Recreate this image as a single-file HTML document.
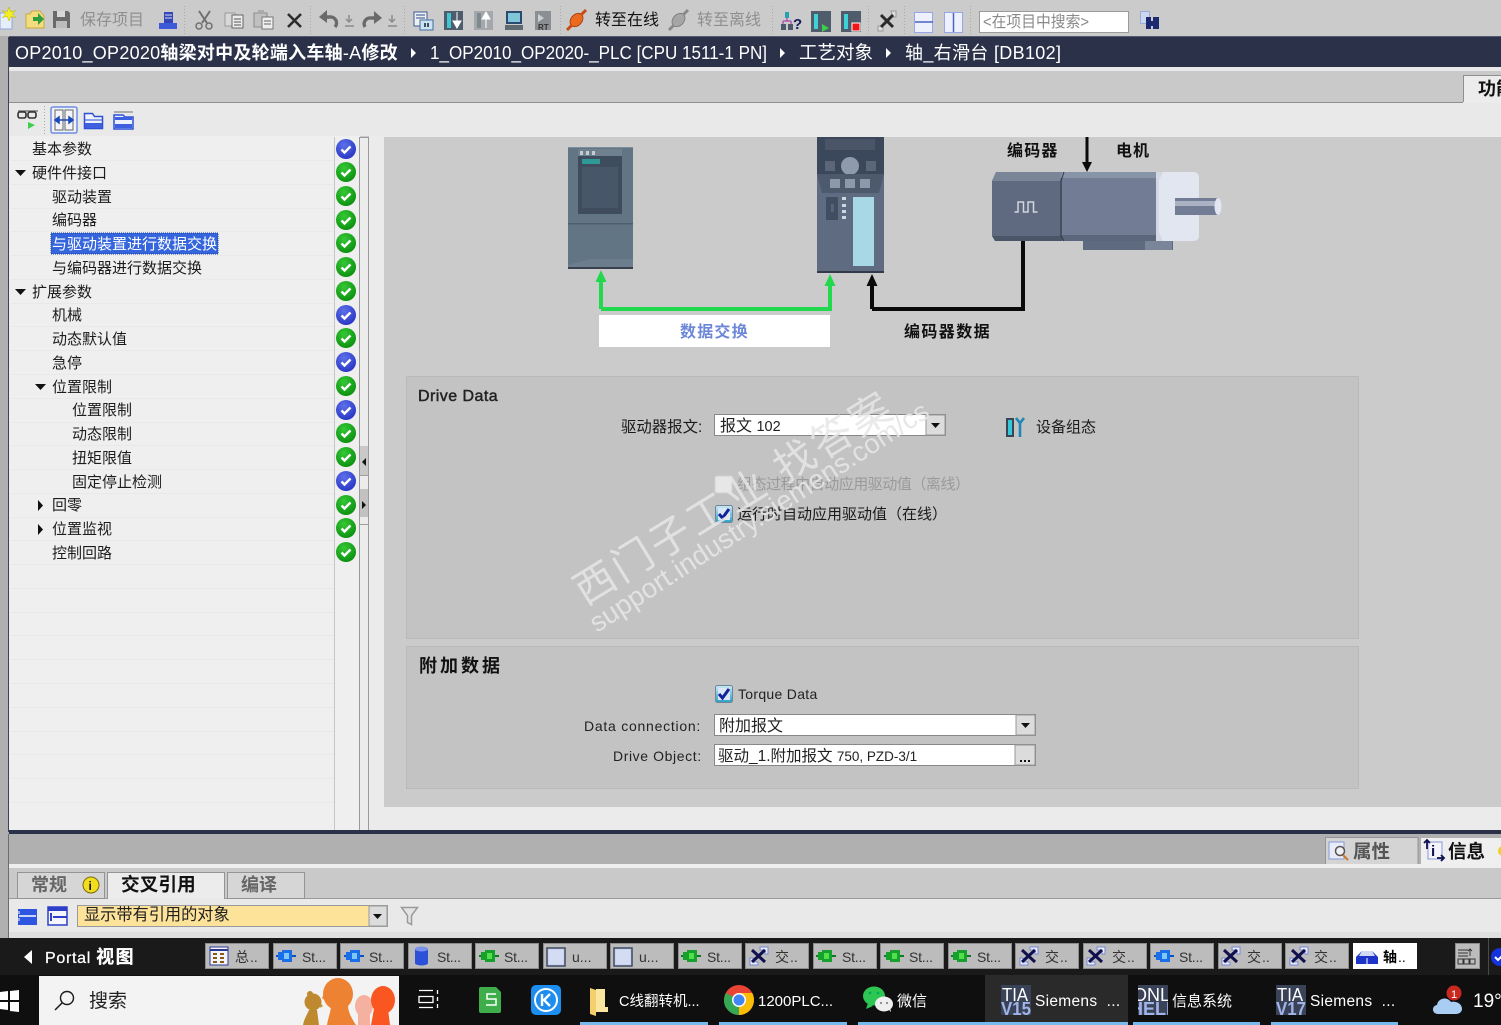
<!DOCTYPE html>
<html lang="zh"><head><meta charset="utf-8"><title>TIA Portal</title>
<style>
html,body{margin:0;padding:0;width:1501px;height:1025px;overflow:hidden;background:#c9c9c9}
svg{display:block;position:absolute;left:0;top:0;filter:blur(.3px)}
text{font-family:"Liberation Sans","Noto Sans CJK SC",sans-serif;font-size:15px;fill:#1c1c1c}
.t{font-size:15px;fill:#1a1a1a}
.g{fill:#8f8f8f;font-size:16px}
.w{fill:#fff}
.b{font-weight:700}
.k{font-size:14px;fill:#333}
.tb{font-size:14.500px;fill:#fff}
.sep{stroke:#a9a9a9;stroke-width:1;stroke-dasharray:1 2}
.row{stroke:#e9e9e9;stroke-width:1}
</style></head><body>
<svg width="1501" height="1025" viewBox="0 0 1501 1025" xmlns="http://www.w3.org/2000/svg">
<defs>
<clipPath id="hc"><rect x="1138" y="985" width="30" height="30"/></clipPath>
<radialGradient id="gc" cx=".4" cy=".3" r=".8"><stop offset="0" stop-color="#35c835"/><stop offset="1" stop-color="#078a0b"/></radialGradient>
<radialGradient id="bc" cx=".4" cy=".3" r=".8"><stop offset="0" stop-color="#5d70ea"/><stop offset="1" stop-color="#2330c0"/></radialGradient>
<linearGradient id="cb" x1="0" y1="0" x2="0" y2="1"><stop offset="0" stop-color="#cfe8f5"/><stop offset="1" stop-color="#27a0c8"/></linearGradient>
<symbol id="ok" viewBox="0 0 20 20" overflow="visible"><circle cx="10" cy="10" r="10" fill="url(#gc)"/><path d="M5.500 10.500l3 3 6-6" fill="none" stroke="#fff" stroke-width="2.400"/></symbol>
<symbol id="bl" viewBox="0 0 20 20" overflow="visible"><circle cx="10" cy="10" r="10" fill="url(#bc)"/><path d="M5.500 10.500l3 3 6-6" fill="none" stroke="#fff" stroke-width="2.400"/></symbol>
<symbol id="chk" viewBox="0 0 18 18"><rect x=".5" y=".5" width="17" height="17" rx="2" fill="url(#cb)" stroke="#6f8796"/><rect x="3" y="3" width="12" height="12" fill="#dbe7f5"/><path d="M4 9l3.500 4 6.500-9" fill="none" stroke="#10229a" stroke-width="3"/></symbol>
<symbol id="sb" viewBox="0 0 20 14"><path d="M0 7h20" stroke="#0a52c8" stroke-width="2"/><path d="M2 3h4v-2h10v12h-10v-2h-4z" fill="#1c6ee8"/><rect x="8" y="4" width="5" height="6" fill="#7ec8f8"/></symbol>
<symbol id="sg" viewBox="0 0 20 14"><path d="M0 7h20" stroke="#0d7c1d" stroke-width="2"/><path d="M2 3h4v-2h10v12h-10v-2h-4z" fill="#16a02c"/><rect x="8" y="4" width="5" height="6" fill="#52e04a"/></symbol>
<symbol id="xr" viewBox="0 0 20 20"><path d="M11 1h8v7h-3v-4h-5zM1 12h3v4h5v3h-8z" fill="#e8ecf8" stroke="#7888d8"/><path d="M3 4l13 12M16 4l-13 12" stroke="#10104e" stroke-width="3"/></symbol>
<symbol id="ub" viewBox="0 0 20 20"><rect x="1" y="1" width="18" height="18" fill="#c9d4f0" stroke="#3e4a60" stroke-width="1.500"/><rect x="3" y="3" width="14" height="14" fill="#d3dcf2"/></symbol>
</defs>

<!-- window bg -->
<rect width="1501" height="1025" fill="#c9c9c9"/>
<rect x="0" y="0" width="1501" height="36" fill="#cbcbcb"/>

<!-- toolbar icons -->
<rect x="0" y="13" width="12" height="16" fill="#e6eefa" stroke="#8fa4d8"/><path d="M9 7l1.800 5 5-1.500-3.500 3.500 3.500 3.500-5-1-1.800 4.500-1.800-4.500-5 1 3.500-3.500-3.500-3.500 5 1.500z" fill="#f4f020" stroke="#b6b400" stroke-width=".5"/>
<path d="M26 14h4l2-3h8l4 5v12h-18z" fill="#f3dc7e" stroke="#c9a93b"/><path d="M33 17h5v-4l6 6-6 6v-4h-5z" fill="#2d9d3d"/>
<path d="M53 11h15l2 2v15h-17z" fill="#6a6a6a"/><rect x="57" y="11" width="8" height="6" fill="#d8d8d8"/><rect x="56" y="21" width="11" height="7" fill="#bcbcbc"/>
<text x="80" y="25" class="g">保存项目</text>
<rect x="164" y="12" width="9" height="11" fill="#3346b8"/><path d="M165 15h7M165 18h7" stroke="#dde" stroke-width="1"/><path d="M159 23h18v6h-18z" fill="#3d5ad8"/>
<line x1="184.500" y1="6" x2="184.500" y2="34" class="sep"/>
<path d="M199 11l8 12M210 11l-8 12" stroke="#707070" stroke-width="2"/><circle cx="199" cy="26" r="3" fill="none" stroke="#707070" stroke-width="1.500"/><circle cx="209" cy="26" r="3" fill="none" stroke="#707070" stroke-width="1.500"/>
<rect x="225" y="13" width="10" height="13" fill="#d8d8d8" stroke="#9a9a9a"/><rect x="232" y="15" width="11" height="13" fill="#ececec" stroke="#666"/><path d="M234 19h7M234 22h7M234 25h7" stroke="#555"/>
<rect x="254" y="13" width="13" height="14" fill="#c0c0c0" stroke="#8c8c8c"/><rect x="258" y="10" width="6" height="4" fill="#aaa"/><rect x="262" y="17" width="11" height="12" fill="#efefef" stroke="#777"/><path d="M264 21h7M264 24h7" stroke="#666"/>
<path d="M288 14l13 13M301 14l-13 13" stroke="#2d2d2d" stroke-width="2.600"/>
<line x1="310.500" y1="6" x2="310.500" y2="34" class="sep"/>
<path d="M323 17h7a6 6 0 0 1 5 10" fill="none" stroke="#6a6a6a" stroke-width="3.400"/><path d="M319 17l8-7v13z" fill="#6a6a6a"/>
<path d="M349 15v7m-3-3l3 3 3-3M345 26h9" stroke="#8b8b8b" stroke-width="1.500" fill="none"/>
<path d="M378 18h-7a6 6 0 0 0-6 9" fill="none" stroke="#6a6a6a" stroke-width="3.400"/><path d="M382 18l-8-7v13z" fill="#6a6a6a"/>
<path d="M392 15v7m-3-3l3 3 3-3M388 26h9" stroke="#8b8b8b" stroke-width="1.500" fill="none"/>
<line x1="404.500" y1="6" x2="404.500" y2="34" class="sep"/>
<rect x="414" y="12" width="13" height="14" fill="#f0f0f0" stroke="#3c5a92"/><path d="M416 15h9M416 18h9" stroke="#2a4a90"/><rect x="420" y="20" width="13" height="10" fill="#cbe4f4" stroke="#406ea0"/><path d="M425 23v4M428 23v4" stroke="#123" stroke-width="1.500"/>
<rect x="444" y="11" width="19" height="19" fill="#4f5c6c"/><rect x="447" y="13" width="4" height="15" fill="#3fc6d0"/><path d="M457 12v9m-4 0h8l-4 7z" fill="#fff" stroke="#fff"/>
<rect x="474" y="11" width="19" height="19" fill="#a4a8ac"/><rect x="477" y="13" width="4" height="15" fill="#7f8a8e"/><path d="M486 28v-9m-4 0h8l-4-7z" fill="#fff" stroke="#fff"/>
<rect x="506" y="11" width="16" height="13" fill="#2b4a72"/><rect x="508" y="13" width="12" height="9" fill="#7fc7d8"/><rect x="505" y="25" width="18" height="5" fill="#5f6a70"/>
<rect x="535" y="11" width="16" height="19" fill="#8b8f93"/><path d="M538 14l6 4-6 4z" fill="#c7d3d0"/><text x="538" y="30" style="font-size:8px;font-weight:700;fill:#333">RT</text>
<line x1="560.500" y1="6" x2="560.500" y2="34" class="sep"/>
<ellipse cx="576.500" cy="20" rx="5.500" ry="7.500" transform="rotate(42 576.500 20)" fill="#ea6a1e" stroke="#a5340b" stroke-width=".8"/><path d="M572 25l-5 5M581 15l5-5" stroke="#c94a12" stroke-width="3"/>
<text x="595" y="25" class="t" style="font-size:16px;fill:#111">转至在线</text>
<ellipse cx="678.500" cy="20" rx="5.500" ry="7.500" transform="rotate(42 678.500 20)" fill="#a6a6a6" stroke="#777" stroke-width=".8"/><path d="M674 25l-5 5M683 15l5-5" stroke="#8a8a8a" stroke-width="3"/>
<text x="697" y="25" class="g">转至离线</text>
<line x1="772.500" y1="6" x2="772.500" y2="34" class="sep"/>
<rect x="785" y="12" width="4" height="6" fill="#27a0b0"/><path d="M787 18v3M783 21h8M783 21v3M791 21v3" stroke="#a02aa0" fill="none"/><rect x="781" y="24" width="5" height="6" fill="#4a5a6a"/><rect x="788" y="24" width="5" height="6" fill="#4a5a6a"/><text x="793" y="29" class="b" style="font-size:15px;fill:#111a5a">?</text>
<rect x="811" y="11" width="20" height="21" fill="#4f5c6c"/><rect x="814" y="14" width="4" height="15" fill="#3fd0d8"/><path d="M822 24l7 4-7 4z" fill="#3bd04a"/>
<rect x="841" y="11" width="20" height="21" fill="#4f5c6c"/><rect x="844" y="14" width="4" height="15" fill="#3fd0d8"/><rect x="852" y="23" width="8" height="8" fill="#f01414" stroke="#fff"/>
<line x1="868.500" y1="6" x2="868.500" y2="34" class="sep"/>
<path d="M891 11h5v6h-3zM878 26h5v5h-5z" fill="#ddd" stroke="#999"/><path d="M881 15l12 12M893 15l-12 12" stroke="#2a2a2a" stroke-width="3"/>
<line x1="904.500" y1="6" x2="904.500" y2="34" class="sep"/>
<rect x="914.500" y="12.500" width="18" height="20" fill="#eef1fb" stroke="#97a6e8"/><path d="M915 22h18" stroke="#4a62c8" stroke-width="1.500"/>
<rect x="944.500" y="12.500" width="18" height="20" fill="#eef1fb" stroke="#97a6e8"/><path d="M953.500 13v19" stroke="#4a62c8" stroke-width="1.500"/>
<line x1="970.500" y1="6" x2="970.500" y2="34" class="sep"/>
<rect x="979.500" y="11.500" width="149" height="21" fill="#fff" stroke="#9a9a9a"/>
<text x="983" y="27" style="font-size:16px;fill:#8a8a8a" textLength="106" lengthAdjust="spacingAndGlyphs">&lt;在项目中搜索&gt;</text>
<rect x="1140.500" y="11.500" width="9" height="12" fill="#ccd8f2" stroke="#9cacd8"/><path d="M1146 17h5v12h-5zM1153 17h6v12h-6z" fill="#1c2b70"/><path d="M1150 21h4v5h-4z" fill="#1c2b70"/>

<!-- title bar -->
<rect x="0" y="36" width="1501" height="1" fill="#525a70"/>
<rect x="9" y="37" width="1492" height="30" fill="#2a3149"/>
<rect x="0" y="36" width="9" height="800" fill="#b0b0b0"/>
<rect x="8" y="37" width="1" height="795" fill="#3c4258"/>
<text x="15" y="59" class="w" style="font-size:18px;letter-spacing:.25px">OP2010_OP2020<tspan class="b">轴梁对中及轮端入车轴</tspan>-A<tspan class="b">修改</tspan></text>
<path d="M411 48l5 5-5 5z" fill="#fff"/>
<text x="430" y="59" class="w" style="font-size:18px" textLength="337" lengthAdjust="spacingAndGlyphs">1_OP2010_OP2020-_PLC [CPU 1511-1 PN]</text>
<path d="M780 48l5 5-5 5z" fill="#fff"/>
<text x="799" y="59" class="w" style="font-size:18.500px">工艺对象</text>
<path d="M886 48l5 5-5 5z" fill="#fff"/>
<text x="905" y="59" class="w" style="font-size:18px" textLength="156">轴_右滑台 [DB102]</text>

<rect x="9" y="67" width="1492" height="4" fill="#e9e9e9"/>
<rect x="9" y="71" width="1492" height="31" fill="#c9c9c9"/>
<rect x="9" y="102" width="1454" height="1" fill="#8f8f8f"/>
<rect x="9" y="103" width="1492" height="33" fill="#e9e9e9"/>
<rect x="1463" y="75" width="38" height="28" fill="#ececec"/>
<path d="M1463.500 102V75.500H1501" fill="none" stroke="#8f8f8f"/>
<text x="1478" y="95" class="b" style="font-size:18px;fill:#111">功能</text>

<!-- tree toolbar -->
<rect x="18" y="112" width="8" height="6" rx="2" fill="none" stroke="#333" stroke-width="1.600"/><rect x="28" y="112" width="8" height="6" rx="2" fill="none" stroke="#333" stroke-width="1.600"/><path d="M18 111h20" stroke="#444"/><path d="M28 122l7 3-7 4z" fill="#3ecf4e"/>
<line x1="44.500" y1="106" x2="44.500" y2="134" class="sep"/>
<rect x="51" y="107" width="26" height="26" rx="2" fill="#eef3fb" stroke="#6d8ee2" stroke-width="1.500"/>
<rect x="55" y="110" width="8" height="20" fill="#f4f5f8" stroke="#666"/><rect x="65" y="110" width="8" height="20" fill="#f4f5f8" stroke="#666"/>
<path d="M56 120h16M59 117l-4 3 4 3zM69 117l4 3-4 3z" stroke="#1b47c0" stroke-width="1.500" fill="#1b47c0"/>
<path d="M84.500 113.500h8l2 3h8v12h-18z" fill="#eef2fd" stroke="#2c50d8" stroke-width="1.500"/><rect x="85" y="123" width="17" height="5" fill="#3e5fe0"/><path d="M85 120h17" stroke="#2c50d8"/>
<path d="M114 112h19" stroke="#999" stroke-width="1.500"/><path d="M114 115h9l2 2h8v12h-19z" fill="#eef2fd" stroke="#2c50d8" stroke-width="1.500"/><rect x="115" y="117" width="17" height="3" fill="#3e5fe0"/><rect x="115" y="124" width="17" height="4" fill="#3e5fe0"/>

<!-- tree -->
<rect x="9" y="136" width="351" height="694" fill="#efefef"/>
<g class="row">
<path d="M10 160.500h324M10 184.500h324M10 208.500h324M10 231.500h324M10 255.500h324M10 279.500h324M10 303.500h324M10 326.500h324M10 350.500h324M10 374.500h324M10 398.500h324M10 422.500h324M10 445.500h324M10 469.500h324M10 493.500h324M10 517.500h324M10 540.500h324M10 564.500h324M10 588.500h324M10 612.500h324M10 635.500h324M10 659.500h324M10 683.500h324M10 707.500h324M10 731.500h324M10 754.500h324M10 778.500h324M10 802.500h324"/>
</g>
<rect x="334" y="137" width="1" height="693" fill="#c6c6c6"/>
<rect x="359" y="137" width="1" height="693" fill="#9a9a9a"/>
<rect x="360" y="137" width="8" height="693" fill="#ececec"/>
<rect x="368" y="137" width="1" height="693" fill="#9a9a9a"/>
<path d="M360 137.500h8" stroke="#9a9a9a"/>
<rect x="360" y="446" width="8" height="29" fill="#c9c9c9"/><path d="M360 475.500h8M360 498.500h8M360 524.500h8" stroke="#9f9f9f"/>
<rect x="360" y="489" width="8" height="28" fill="#c2c2c2"/>
<path d="M366 458v8l-4-4zM362 501v8l4-4z" fill="#111"/>

<rect x="51" y="233" width="167" height="21" fill="#3465dc" stroke="#1c3d99" stroke-dasharray="1 1"/>
<g class="t">
<text x="32" y="154">基本参数</text>
<text x="32" y="178">硬件件接口</text>
<text x="52" y="202">驱动装置</text>
<text x="52" y="225">编码器</text>
<text x="52" y="249" style="fill:#fff">与驱动装置进行数据交换</text>
<text x="52" y="273">与编码器进行数据交换</text>
<text x="32" y="297">扩展参数</text>
<text x="52" y="320">机械</text>
<text x="52" y="344">动态默认值</text>
<text x="52" y="368">急停</text>
<text x="52" y="392">位置限制</text>
<text x="72" y="415">位置限制</text>
<text x="72" y="439">动态限制</text>
<text x="72" y="463">扭矩限值</text>
<text x="72" y="487">固定停止检测</text>
<text x="52" y="510">回零</text>
<text x="52" y="534">位置监视</text>
<text x="52" y="558">控制回路</text>
</g>
<path d="M15 170h11l-5.500 6zM15 289h11l-5.500 6zM35 384h11l-5.500 6z" fill="#111"/>
<path d="M38 500v11l5-5.500zM38 524v11l5-5.500z" fill="#111"/>
<use href="#bl" x="336" y="139" width="20" height="20"/>
<use href="#ok" x="336" y="162" width="20" height="20"/>
<use href="#ok" x="336" y="186" width="20" height="20"/>
<use href="#ok" x="336" y="210" width="20" height="20"/>
<use href="#ok" x="336" y="233" width="20" height="20"/>
<use href="#ok" x="336" y="257" width="20" height="20"/>
<use href="#ok" x="336" y="281" width="20" height="20"/>
<use href="#bl" x="336" y="305" width="20" height="20"/>
<use href="#ok" x="336" y="328" width="20" height="20"/>
<use href="#bl" x="336" y="352" width="20" height="20"/>
<use href="#ok" x="336" y="376" width="20" height="20"/>
<use href="#bl" x="336" y="400" width="20" height="20"/>
<use href="#ok" x="336" y="423" width="20" height="20"/>
<use href="#ok" x="336" y="447" width="20" height="20"/>
<use href="#bl" x="336" y="471" width="20" height="20"/>
<use href="#ok" x="336" y="495" width="20" height="20"/>
<use href="#ok" x="336" y="518" width="20" height="20"/>
<use href="#ok" x="336" y="542" width="20" height="20"/>

<!-- right panel -->
<rect x="369" y="136" width="1132" height="694" fill="#ebebeb"/>
<rect x="384" y="137" width="1117" height="670" fill="#cbcbcb"/>

<!-- PLC -->
<rect x="568" y="147" width="65" height="121" fill="#627585"/>
<rect x="568" y="147" width="65" height="1" fill="#7c8d9b"/>
<rect x="578" y="149" width="44" height="12" fill="#6f808f"/>
<rect x="580" y="151" width="3" height="4" fill="#c4ccd2"/><rect x="586" y="151" width="3" height="4" fill="#c4ccd2"/><rect x="592" y="151" width="3" height="4" fill="#c4ccd2"/>
<rect x="578" y="156" width="44" height="58" fill="#3e4c5e"/>
<rect x="582" y="159" width="18" height="5" fill="#2d9a98"/>
<rect x="582" y="167" width="36" height="41" fill="#48566a"/>
<rect x="568" y="223" width="65" height="1.500" fill="#4d5f6e"/>
<path d="M568 268v-3l22-6h43v9z" fill="#6c7e8d"/>
<rect x="568" y="267" width="65" height="2" fill="#39414f"/>

<!-- Drive -->
<rect x="817" y="137" width="67" height="135" fill="#5e6b80"/>
<rect x="817" y="137" width="67" height="38" fill="#3b475a"/>
<rect x="825" y="139" width="50" height="11" fill="#4a5568"/>
<ellipse cx="850" cy="166" rx="9" ry="9" fill="#8f9aad"/>
<rect x="825" y="161" width="10" height="10" fill="#5b6678"/><rect x="866" y="161" width="10" height="10" fill="#5b6678"/>
<path d="M817 174h67l-5 19h-57z" fill="#4d596c"/>
<rect x="830" y="179" width="10" height="9" fill="#8d98aa"/><rect x="845" y="179" width="10" height="9" fill="#8d98aa"/><rect x="860" y="179" width="10" height="9" fill="#8d98aa"/>
<rect x="826" y="197" width="12" height="23" fill="#414d60"/><rect x="831" y="204" width="3" height="8" fill="#58647a"/>
<rect x="842" y="197" width="4" height="3" fill="#cfd6df"/><rect x="842" y="204" width="4" height="3" fill="#cfd6df"/><rect x="842" y="210" width="4" height="3" fill="#cfd6df"/><rect x="842" y="216" width="4" height="3" fill="#cfd6df"/>
<rect x="853" y="197" width="21" height="69" fill="#a8d8e6"/>
<rect x="817" y="271" width="67" height="2" fill="#323a4a"/>

<!-- Motor -->
<path d="M992 181l4-9h66v69h-66l-4-5z" fill="#5f6a80"/>
<path d="M992 181l4-9h66l-2 9z" fill="#7b8598"/><path d="M995 241l-3-5h70v5z" fill="#4b5568"/>
<rect x="1062" y="172" width="95" height="69" fill="#727c94"/>
<path d="M1062 172h95v6h-97z" fill="#8894a8"/><path d="M1060 235h100v6h-97z" fill="#5b657b"/>
<path d="M1064 172l-3 9 0 55 3 5" fill="none" stroke="#2f3646" stroke-width="1"/>
<rect x="1083" y="241" width="90" height="9" fill="#5d6a80"/><rect x="1145" y="241" width="27" height="9" fill="#7a859a"/>
<rect x="1156" y="172" width="43" height="69" rx="5" fill="#e2e6f0"/>
<path d="M1156 172h7l-4 8v52l4 9h-7z" fill="#d4d8e2"/>
<rect x="1175" y="198" width="44" height="17" fill="#727c94"/><rect x="1175" y="201" width="44" height="5" fill="#aab2c4"/>
<ellipse cx="1218" cy="206.500" rx="3.500" ry="8.500" fill="#e2e6f0"/>
<path d="M1014.500 212h3.500v-10h5.500v10h4.500v-10h5.500v10h4" fill="none" stroke="#d2d6dd" stroke-width="1.500"/>

<!-- arrows -->
<path d="M601 309v-30M601 309h229v-28" fill="none" stroke="#22d84c" stroke-width="4"/>
<path d="M601 270l-5.500 12h11zM830 274l-5.500 12h11z" fill="#22d84c"/>
<path d="M872 309v-28M872 309h151v-68" fill="none" stroke="#0a0a0a" stroke-width="4"/>
<path d="M872 274l-5.500 12h11z" fill="#0a0a0a"/>
<path d="M1087 137v27" stroke="#0a0a0a" stroke-width="3"/><path d="M1087 172l-5-10h10z" fill="#0a0a0a"/>
<rect x="599" y="315" width="231" height="32" fill="#fff"/>
<text x="680" y="337" class="b" style="font-size:16px;fill:#6d88d8;letter-spacing:1.200px">数据交换</text>
<text x="904" y="337" class="b" style="font-size:16px;fill:#111;letter-spacing:1.400px">编码器数据</text>
<text x="1007" y="156" class="b" style="font-size:16px;fill:#111;letter-spacing:1.200px">编码器</text>
<text x="1116" y="156" class="b" style="font-size:16px;fill:#111;letter-spacing:1px">电机</text>

<!-- Drive Data -->
<rect x="406.500" y="376.500" width="952" height="262" fill="#c3c3c3" stroke="#b9b9b9"/>
<text x="418" y="401" style="font-size:16px;letter-spacing:.45px;fill:#222;stroke:#222;stroke-width:.45">Drive Data</text>
<text x="621" y="432" class="t" style="font-size:15.400px">驱动器报文:</text>
<rect x="714.500" y="414.500" width="231" height="21" fill="#fff" stroke="#888"/>
<text x="720" y="431" style="font-size:16px;fill:#222">报文 <tspan style="font-size:14.500px">102</tspan></text>
<rect x="926" y="415" width="19" height="20" fill="#dcdcdc" stroke="#999"/><path d="M931 423h9l-4.500 5z" fill="#111"/>
<rect x="1006" y="418" width="8" height="19" fill="#3a4656"/><rect x="1008" y="420" width="4" height="15" fill="#35c8d8"/>
<path d="M1016 418l4 5 4-5M1020 423v14" fill="none" stroke="#1f86b8" stroke-width="2.600"/>
<text x="1036" y="432" class="t">设备组态</text>

<rect x="715" y="476" width="17" height="17" rx="2" fill="#e7e7e7" stroke="#d2d2d2"/>
<text x="737" y="489" style="font-size:15px;fill:#9a9a9a" textLength="233">组态过程中自动应用驱动值（离线）</text>
<use href="#chk" x="715" y="505" width="18" height="18"/>
<text x="737" y="519" style="font-size:15px;fill:#1a1a1a">运行时自动应用驱动值（在线）</text>

<!-- watermark -->
<text transform="translate(585,606) rotate(-31.500)" style="font-size:41px;fill:#e6e6e6;fill-opacity:.85;letter-spacing:3px">西门子工业 找答案</text>
<text transform="translate(597,633) rotate(-33)" style="font-size:27.500px;fill:#e6e6e6;fill-opacity:.9">support.industry.siemens.com/cs</text>

<!-- 附加数据 -->
<rect x="406.500" y="646.500" width="952" height="142" fill="#c3c3c3" stroke="#b9b9b9"/>
<text x="419" y="672" class="b" style="font-size:18px;fill:#111;letter-spacing:3px">附加数据</text>
<use href="#chk" x="715" y="685" width="18" height="18"/>
<text x="738" y="699" style="font-size:14px;letter-spacing:.3px;fill:#222">Torque Data</text>
<text x="584" y="731" style="font-size:14px;letter-spacing:.75px;fill:#222">Data connection:</text>
<rect x="714.500" y="714.500" width="321" height="21" fill="#fff" stroke="#888"/>
<text x="719" y="731" style="font-size:16px;fill:#222">附加报文</text>
<rect x="1016" y="715" width="19" height="20" fill="#dcdcdc" stroke="#999"/><path d="M1021 723h9l-4.500 5z" fill="#111"/>
<text x="613" y="761" style="font-size:14px;letter-spacing:.6px;fill:#222">Drive Object:</text>
<rect x="714.500" y="744.500" width="321" height="21" fill="#fff" stroke="#888"/>
<text x="718" y="761" style="font-size:15.500px;fill:#222">驱动_1.附加报文 <tspan style="font-size:13.500px">750, PZD-3/1</tspan></text>
<rect x="1015" y="745" width="20" height="20" fill="#dcdcdc" stroke="#999"/>
<path d="M1020 761h2M1024 761h2M1028 761h2" stroke="#111" stroke-width="2"/>

<!-- bottom panel -->
<rect x="9" y="830" width="1492" height="4" fill="#2a3149"/>
<rect x="0" y="834" width="1501" height="30" fill="#b0b0b0"/>
<rect x="8" y="834" width="1" height="104" fill="#6c6c6c"/>
<rect x="9" y="864" width="1492" height="4" fill="#eeeeee"/>
<rect x="9" y="868" width="1492" height="30" fill="#c9c9c9"/>
<rect x="9" y="898" width="1492" height="1" fill="#9a9a9a"/>
<rect x="9" y="899" width="1492" height="39" fill="#e9e9e9"/>
<rect x="9" y="932" width="1492" height="6" fill="#e0e0e0"/>
<rect x="0" y="864" width="8" height="74" fill="#b0b0b0"/>

<rect x="17.500" y="872.500" width="87" height="26" fill="#d6d6d6" stroke="#949494"/>
<text x="31" y="891" class="b" style="font-size:18px;fill:#666">常规</text>
<circle cx="91" cy="885" r="8" fill="#f2dc1c" stroke="#7a6a10"/><text x="88.500" y="890" class="b" style="font-size:12px;fill:#111">i</text>
<path d="M107.500 899v-26.500h117V899" fill="#ececec" stroke="#949494"/>
<text x="121" y="891" class="b" style="font-size:18.700px;fill:#111">交叉引用</text>
<rect x="227.500" y="872.500" width="77" height="26" fill="#d6d6d6" stroke="#949494"/>
<text x="241" y="891" class="b" style="font-size:18px;fill:#666">编译</text>

<rect x="18" y="909" width="19" height="16" fill="#2d55e0"/><path d="M19 916h17" stroke="#fff" stroke-width="1.500"/><path d="M19 911v3M19 918v3" stroke="#fff"/>
<rect x="48" y="907" width="19" height="18" fill="#f4f6fc" stroke="#2d3fc8" stroke-width="1.500"/><rect x="48" y="907" width="19" height="4" fill="#2d3fc8"/><rect x="53" y="916" width="14" height="2" fill="#2d3fc8"/><rect x="50" y="913" width="2" height="8" fill="#2d3fc8"/>
<rect x="77.500" y="905.500" width="310" height="21" fill="#fde29a" stroke="#9a9a9a"/>
<text x="84" y="920" style="font-size:16.200px;fill:#1f1f1f">显示带有引用的对象</text>
<rect x="369" y="906" width="18" height="20" fill="#dcdcdc" stroke="#999"/><path d="M373 914h9l-4.500 5z" fill="#111"/>
<path d="M401.500 907.500h16l-6 8v9l-4-2v-7z" fill="#e4e4e4" stroke="#9a9a9a" stroke-width="1.500"/>

<!-- right bottom tabs -->
<path d="M1325.500 864v-26.500h92.500V864" fill="#d4d4d4" stroke="#949494"/>
<rect x="1329" y="842" width="15" height="17" fill="#e8ecf8" stroke="#8898d8"/><circle cx="1340" cy="851" r="4.500" fill="#f0f0f0" stroke="#555" stroke-width="1.500"/><path d="M1343 855l5 5" stroke="#d07820" stroke-width="2"/>
<text x="1353" y="858" class="b" style="font-size:18.500px;fill:#555">属性</text>
<rect x="1421" y="838" width="80" height="27" fill="#efefef"/>
<rect x="1428" y="842" width="14" height="17" fill="#f3f5fb" stroke="#8898d8"/>
<path d="M1424 843l3-3 3 3M1427 841v8" fill="none" stroke="#10104e" stroke-width="1.800"/>
<text x="1431" y="856" class="b" style="font-size:15px;fill:#10104e">i</text>
<path d="M1437 858h6m-2-3l3 3-3 3" fill="none" stroke="#10104e" stroke-width="1.800"/>
<text x="1448" y="858" class="b" style="font-size:18.500px;fill:#111">信息</text>
<circle cx="1503" cy="851" r="5" fill="#f0d020"/>

<!-- portal strip -->
<rect x="0" y="938" width="1501" height="37" fill="#1a1a1a"/>
<path d="M32 950v14l-8-7z" fill="#fff"/>
<text x="45" y="963" class="w" style="font-size:16px;letter-spacing:.7px;stroke:#fff;stroke-width:.25">Portal <tspan class="b" style="font-size:18px;letter-spacing:1.500px">视图</tspan></text>

<g fill="#bcbcbc" stroke="#8d8d8d">
<rect x="205.500" y="943.500" width="63" height="25"/><rect x="273.500" y="943.500" width="63" height="25"/><rect x="340.500" y="943.500" width="63" height="25"/><rect x="408.500" y="943.500" width="63" height="25"/><rect x="475.500" y="943.500" width="63" height="25"/><rect x="543.500" y="943.500" width="63" height="25"/><rect x="610.500" y="943.500" width="63" height="25"/><rect x="678.500" y="943.500" width="63" height="25"/><rect x="745.500" y="943.500" width="63" height="25"/><rect x="813.500" y="943.500" width="63" height="25"/><rect x="880.500" y="943.500" width="63" height="25"/><rect x="948.500" y="943.500" width="63" height="25"/><rect x="1015.500" y="943.500" width="63" height="25"/><rect x="1083.500" y="943.500" width="63" height="25"/><rect x="1150.500" y="943.500" width="63" height="25"/><rect x="1218.500" y="943.500" width="63" height="25"/><rect x="1285.500" y="943.500" width="63" height="25"/>
</g>
<rect x="1353" y="943" width="64" height="26" fill="#fff"/>
<rect x="1455.500" y="943.500" width="24" height="25" fill="#bcbcbc" stroke="#8d8d8d"/>
<path d="M1458 950h10M1458 953h10M1458 956h10M1470 956v-7m-2 2l2-2 2 2" stroke="#333" fill="none"/><rect x="1458" y="959" width="5" height="5" fill="none" stroke="#333"/><rect x="1464" y="959" width="5" height="5" fill="none" stroke="#333"/><rect x="1470" y="959" width="5" height="5" fill="none" stroke="#333"/>
<rect x="1488" y="938" width="1" height="37" fill="#4a4a4a"/>
<circle cx="1500" cy="957" r="9" fill="#1433e0"/><path d="M1495 957l3 3 5-5" fill="none" stroke="#fff" stroke-width="2"/>

<rect x="210" y="947" width="18" height="18" fill="#f2f4fa" stroke="#2a3a90"/><path d="M210 950h18" stroke="#2a3a90" stroke-width="2"/><path d="M213 954h4M220 954h4M213 958h4M220 958h4M213 962h4M220 962h4" stroke="#8a5a10" stroke-width="2"/>
<text x="235" y="962" class="k">总<tspan dx="1">..</tspan></text>
<use href="#sb" x="276" y="949" width="20" height="14"/><text x="302" y="962" class="k" textLength="24">St...</text>
<use href="#sb" x="344" y="949" width="20" height="14"/><text x="369" y="962" class="k" textLength="24">St...</text>
<path d="M415 949h13v14a6.500 2.500 0 0 1-13 0z" fill="#2c50d8"/><ellipse cx="421.500" cy="949" rx="6.500" ry="2.500" fill="#7a92ea"/>
<text x="437" y="962" class="k" textLength="24">St...</text>
<use href="#sg" x="479" y="949" width="20" height="14"/><text x="504" y="962" class="k" textLength="24">St...</text>
<use href="#ub" x="546" y="947" width="20" height="20"/><text x="572" y="962" class="k">u...</text>
<use href="#ub" x="613" y="947" width="20" height="20"/><text x="639" y="962" class="k">u...</text>
<use href="#sg" x="681" y="949" width="20" height="14"/><text x="707" y="962" class="k" textLength="24">St...</text>
<use href="#xr" x="749" y="946" width="20" height="20"/><text x="775" y="962" class="k">交<tspan dx="1">..</tspan></text>
<use href="#sg" x="816" y="949" width="20" height="14"/><text x="842" y="962" class="k" textLength="24">St...</text>
<use href="#sg" x="884" y="949" width="20" height="14"/><text x="909" y="962" class="k" textLength="24">St...</text>
<use href="#sg" x="951" y="949" width="20" height="14"/><text x="977" y="962" class="k" textLength="24">St...</text>
<use href="#xr" x="1019" y="946" width="20" height="20"/><text x="1045" y="962" class="k">交<tspan dx="1">..</tspan></text>
<use href="#xr" x="1086" y="946" width="20" height="20"/><text x="1112" y="962" class="k">交<tspan dx="1">..</tspan></text>
<use href="#sb" x="1154" y="949" width="20" height="14"/><text x="1179" y="962" class="k" textLength="24">St...</text>
<use href="#xr" x="1221" y="946" width="20" height="20"/><text x="1247" y="962" class="k">交<tspan dx="1">..</tspan></text>
<use href="#xr" x="1289" y="946" width="20" height="20"/><text x="1314" y="962" class="k">交<tspan dx="1">..</tspan></text>
<path d="M1356 964v-7l6-6h10l6 6v7h-22z" fill="#1c34c8"/><path d="M1362 951h10l3 5h-16z" fill="#d0dcf4"/><path d="M1367 958v6" stroke="#fff"/>
<text x="1383" y="962" class="b" style="font-size:14px;fill:#000">轴<tspan dx="1" style="font-weight:400">..</tspan></text>

<!-- windows taskbar -->
<rect x="0" y="975" width="1501" height="50" fill="#0f0f0f"/>
<rect x="985" y="975" width="143" height="50" fill="#2a2a2a"/>
<path d="M0 992l8-1v9h-8zM10 991l9-1v10h-9zM0 1002h8v8l-8-1zM10 1002h9v10l-9-1z" fill="#fff"/>
<rect x="39" y="976" width="360" height="49" fill="#f3f3f3"/>
<circle cx="67" cy="998" r="6.500" fill="none" stroke="#1a1a1a" stroke-width="1.400"/><path d="M62 1003l-7 7" stroke="#1a1a1a" stroke-width="1.500"/>
<text x="89" y="1007" style="font-size:19px;fill:#222">搜索</text>
<!-- silhouettes -->
<circle cx="310" cy="994" r="3" fill="#bf8a2f"/><ellipse cx="313" cy="1002" rx="8.500" ry="8.500" fill="#bf8a2f"/><path d="M303 1025c1-6 4-10 6-15h8l2 15z" fill="#bf8a2f"/><path d="M321 1004l2 2-3 2z" fill="#bf8a2f"/>
<ellipse cx="338" cy="994" rx="15" ry="16" fill="#ee8233"/><path d="M327 1025c1-7 4-13 4-20h17c0 7 4 14 8 20z" fill="#ee8233"/><path d="M324 994l-2 4 4 3z" fill="#ee8233"/>
<ellipse cx="364" cy="1006" rx="9" ry="11" fill="#f5b19f"/><path d="M358 1025v-12h12v12z" fill="#f5b19f"/>
<ellipse cx="383" cy="1000" rx="12" ry="14" fill="#f95622"/><path d="M371 1025l3-16h14l2 16z" fill="#f95622"/>
<path d="M419 990.500h14M419 1007.500h14M419 996.500h14v6h-14zM437.500 990v4M437.500 997v4M437.500 1004v4" fill="none" stroke="#fff" stroke-width="1.300"/>
<rect x="479" y="987" width="22" height="26" rx="2" fill="#3eae4b"/><path d="M501 987l-5 0 5 5z" fill="#0f0f0f"/><path d="M496 994h-9v5h9v6h-10" fill="none" stroke="#fff" stroke-width="1.500"/>
<rect x="531" y="985" width="30" height="30" rx="5" fill="#1d8ef0"/><circle cx="546" cy="1000" r="11" fill="none" stroke="#fff" stroke-width="2"/><path d="M542 994v12M550 994l-6 6 6 6" fill="none" stroke="#fff" stroke-width="2.400"/>
<path d="M590 988l6 2v26l-6-2z" fill="#f3cf6e"/><path d="M596 989h9v18h3v5h-12z" fill="#fbe6a0"/>
<text x="619" y="1006" class="tb">C线翻转机...</text>
<circle cx="739" cy="1000" r="15" fill="#e94335"/><path d="M739 1000l-13 7.500a15 15 0 0 0 13 7.500z" fill="#34a853"/><path d="M726 1008a15 15 0 0 1 0-15l13 7z" fill="#34a853"/><path d="M739 1015a15 15 0 0 0 15-15 15 15 0 0 0-2-7.500h-13z" fill="#fbbc05"/><path d="M726 993a15 15 0 0 1 26 0h-13z" fill="#e94335"/><circle cx="739" cy="1000" r="7" fill="#fff"/><circle cx="739" cy="1000" r="5.500" fill="#4285f4"/>
<text x="758" y="1006" style="font-size:15px;fill:#fff">1200PLC...</text>
<ellipse cx="874" cy="996" rx="11" ry="9.500" fill="#2dc653"/><path d="M868 1003l-2 6 7-3z" fill="#2dc653"/>
<ellipse cx="884" cy="1004" rx="9" ry="7.500" fill="#efefef"/><path d="M888 1009l3 3-1-5z" fill="#efefef"/>
<circle cx="870" cy="993" r="1.300" fill="#0a5"/><circle cx="878" cy="993" r="1.300" fill="#0a5"/><circle cx="881" cy="1003" r="1.100" fill="#888"/><circle cx="887" cy="1003" r="1.100" fill="#888"/>
<text x="897" y="1006" style="font-size:15px;fill:#fff">微信</text>
<rect x="1001" y="985" width="30" height="30" fill="#3a4258"/>
<text x="1002" y="1001" style="font-size:18px;fill:#fff" textLength="26" lengthAdjust="spacingAndGlyphs">TIA</text><text x="1001" y="1015" class="b" style="font-size:18px;fill:#a0b4e8" textLength="30" lengthAdjust="spacingAndGlyphs">V15</text>
<text x="1035" y="1006" style="font-size:15.500px;fill:#fff;letter-spacing:.3px;white-space:pre">Siemens  ...</text>
<rect x="1138" y="985" width="30" height="30" fill="#3a4258"/>
<g clip-path="url(#hc)"><text x="1133" y="1001" style="font-size:18px;fill:#fff">ONLI</text><text x="1130" y="1015" class="b" style="font-size:18px;fill:#a0b4e8">HELP</text></g>
<text x="1172" y="1006" style="font-size:15px;fill:#fff">信息系统</text>
<rect x="1276" y="985" width="30" height="30" fill="#3a4258"/>
<text x="1277" y="1001" style="font-size:18px;fill:#fff" textLength="26" lengthAdjust="spacingAndGlyphs">TIA</text><text x="1276" y="1015" class="b" style="font-size:18px;fill:#a0b4e8" textLength="30" lengthAdjust="spacingAndGlyphs">V17</text>
<text x="1310" y="1006" style="font-size:15.500px;fill:#fff;letter-spacing:.3px;white-space:pre">Siemens  ...</text>
<path d="M1438 1014c-6 0-7-8-1-9 1-7 10-9 14-3 6-1 11 2 11 7 0 3-3 5-6 5z" fill="#a9cdf3"/>
<circle cx="1454" cy="993" r="7.500" fill="#c8281e"/><text x="1451" y="998" style="font-size:11px;fill:#fff">1</text>
<text x="1473" y="1007" style="font-size:19px;fill:#fff">19°</text>
<rect x="580" y="1022" width="128" height="3" fill="#76b9ed"/><rect x="719" y="1022" width="128" height="3" fill="#76b9ed"/><rect x="858" y="1022" width="127" height="3" fill="#76b9ed"/><rect x="985" y="1022" width="143" height="3" fill="#76b9ed"/><rect x="1133" y="1022" width="127" height="3" fill="#76b9ed"/><rect x="1271" y="1022" width="127" height="3" fill="#76b9ed"/>
</svg>
</body></html>
